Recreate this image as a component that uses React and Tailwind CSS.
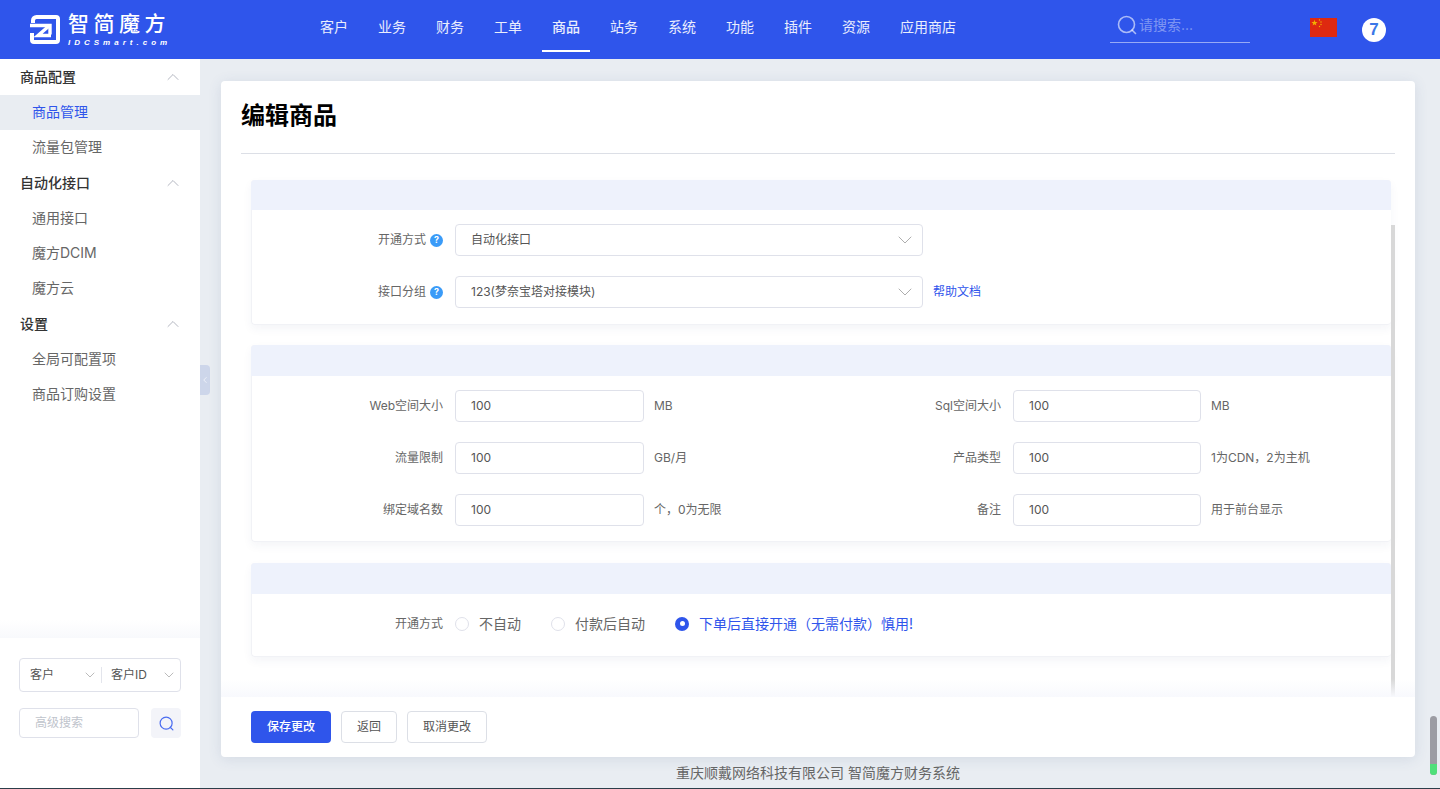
import { ChevronDown, ChevronLeft, ChevronUp } from 'lucide-react';

const navItems = ['客户', '业务', '财务', '工单', '商品', '站务', '系统', '功能', '插件', '资源', '应用商店'];

const menu = [
  { title: '商品配置', items: ['商品管理', '流量包管理'] },
  { title: '自动化接口', items: ['通用接口', '魔方DCIM', '魔方云'] },
  { title: '设置', items: ['全局可配置项', '商品订购设置'] },
];

const specs = [
  ['Web空间大小', 'MB', 'Sql空间大小', 'MB'],
  ['流量限制', 'GB/月', '产品类型', '1为CDN，2为主机'],
  ['绑定域名数', '个，0为无限', '备注', '用于前台显示'],
];

const SearchIcon = ({ className }) => (
  <svg viewBox="0 0 20 20" fill="none" stroke="currentColor" className={className}>
    <circle cx="9.5" cy="9.5" r="8" strokeWidth="1.6" />
    <path d="M15 15l3.5 3.5" strokeWidth="1.6" strokeLinecap="round" />
  </svg>
);

const Logo = () => (
  <div className="flex items-center gap-[9px] w-[276px] pl-[30px] shrink-0 text-white">
    <svg viewBox="0 0 30 29" fill="none" stroke="#fff" className="w-[30px] h-[29px]">
      <path d="M3 8V5.5A3.5 3.5 0 0 1 6.500 2H26a2 2 0 0 1 2 2v21a2 2 0 0 1-2 2H4a2 2 0 0 1-2-2v-7" strokeWidth="4" />
      <path d="M0 10.500h20v9" strokeWidth="3.400" />
      <path d="M19 11L8 20.500h13" strokeWidth="3.400" />
    </svg>
    <div className="flex flex-col -ml-[1px]">
      <span className="text-[21px] leading-[21px] tracking-[4.5px] whitespace-nowrap font-medium font-['Noto_Sans_CJK_SC',sans-serif]">
        智简魔方
      </span>
      <span className="mt-[6px] text-[8px] leading-[8px] font-bold italic tracking-[4px] whitespace-nowrap font-['Liberation_Sans',sans-serif]">
        IDCSmart.com
      </span>
    </div>
  </div>
);

const Header = () => (
  <header className="h-[59px] shrink-0 bg-[#2f55eb] flex items-stretch text-white">
    <Logo />
    <nav className="flex w-[804px] shrink-0 pl-[29px]">
      {navItems.map((item) => (
        <a
          key={item}
          className={`relative px-[15px] flex items-center pb-[6px] text-sm ${
            item === '商品' ? 'font-medium' : ''
          } text-white/90`}
        >
          {item}
          {item === '商品' && <span className="absolute left-[5px] right-[5px] bottom-[7px] h-[2px] bg-white" />}
        </a>
      ))}
    </nav>
    <div className="w-[140px] h-[43px] ml-[30px] shrink-0 border-b border-white/50 flex items-center pl-[7px] pt-[8px] gap-[2px]">
      <SearchIcon className="w-5 h-5 text-white/60" />
      <span className="text-sm text-white/40">请搜索...</span>
    </div>
    <div className="ml-[60px] mt-[18px] w-[27px] h-[19px] bg-[#de2910] shrink-0">
      <svg viewBox="0 0 27 19" className="w-full h-full">
        <polygon points="4.5,1.8 5.3,4 7.6,4 5.8,5.4 6.4,7.6 4.5,6.3 2.6,7.6 3.2,5.4 1.4,4 3.7,4" fill="#f2b000" />
        <circle cx="9.5" cy="2" r="0.7" fill="#f2b000" />
        <circle cx="11" cy="4" r="0.7" fill="#f2b000" />
        <circle cx="11" cy="6.5" r="0.7" fill="#f2b000" />
        <circle cx="9.5" cy="8.5" r="0.7" fill="#f2b000" />
      </svg>
    </div>
    <div className="ml-[25px] mt-[18px] w-6 h-6 rounded-full bg-white flex items-center justify-center text-[#3b78e7] text-[17px] font-bold font-['Liberation_Sans',sans-serif]">
      7
    </div>
  </header>
);

const Sidebar = () => (
  <aside className="relative w-[200px] shrink-0 bg-white flex flex-col">
    <div className="flex-1">
      {menu.map((group) => (
        <div key={group.title}>
          <div className="h-9 pl-5 pr-[17px] flex items-center justify-between text-[#333] text-sm font-medium">
            {group.title}
            <ChevronUp size={20} strokeWidth={0.9} className="text-[#9a9fac]" />
          </div>
          {group.items.map((item) => (
            <div
              key={item}
              className={`h-[35px] pl-8 pb-[2px] flex items-center text-sm ${
                item === '商品管理' ? 'bg-[#e9edf2] text-[#2f55eb]' : 'text-[#666]'
              }`}
            >
              {item}
            </div>
          ))}
        </div>
      ))}
    </div>
    <div className="h-[18px] bg-gradient-to-b from-white to-[#f8f9fc]" />
    <div className="h-[150px] shrink-0 px-[19px] pt-5">
      <div className="h-[34px] border border-[#dfe1ea] rounded flex items-center text-xs text-[#555]">
        <div className="w-[81px] pl-[10px] pr-[3px] flex items-center justify-between">
          客户
          <ChevronDown size={16} strokeWidth={1} className="text-[#999]" />
        </div>
        <span className="w-px h-4 bg-[#e3e5ec]" />
        <div className="flex-1 pl-[9px] pr-[3px] flex items-center justify-between">
          客户ID
          <ChevronDown size={16} strokeWidth={1} className="text-[#999]" />
        </div>
      </div>
      <div className="mt-4 flex gap-3">
        <div className="w-[120px] h-[30px] border border-[#dfe1ea] rounded pl-[15px] flex items-center text-xs text-[#c0c4cc]">
          高级搜索
        </div>
        <button className="w-[30px] h-[30px] rounded bg-[#f3f4f9] flex items-center justify-center text-[#4a6cf0]">
          <SearchIcon className="w-[15px] h-[15px]" />
        </button>
      </div>
    </div>
    <div className="absolute left-full top-[306px] w-[10px] h-[30px] bg-[#cdd6ea] rounded-r flex items-center justify-center text-white">
      <ChevronLeft size={10} strokeWidth={1.5} className="shrink-0" />
    </div>
  </aside>
);

const Help = () => (
  <span className="w-[13px] h-[13px] rounded-full bg-[#3a9bf8] text-white text-[9px] font-bold flex items-center justify-center">
    ?
  </span>
);

const Section = ({ className, tall, children }) => (
  <section className={`rounded border border-[#f1f2f6] border-r-0 shadow-[0_4px_10px_rgba(40,60,120,0.05)] ${className}`}>
    <div className={`${tall ? 'h-[31px]' : 'h-[30px]'} -ml-px -mt-px bg-[#eef2fc] rounded-t`} />
    {children}
  </section>
);

const Label = ({ children, help }) => (
  <div className="w-[191px] shrink-0 flex items-center justify-end gap-1 text-xs text-[#666]">
    {children}
    {help && <Help />}
  </div>
);

const SelectField = ({ label, value, children }) => (
  <div className="flex items-center gap-3">
    <Label help>{label}</Label>
    <div className="w-[468px] h-8 border border-[#dfe1ea] rounded pl-[15px] pr-[5px] flex items-center justify-between text-xs text-[#555]">
      {value}
      <ChevronDown size={24} strokeWidth={0.8} className="text-[#999]" />
    </div>
    {children}
  </div>
);

const InputField = ({ label, unit, wide }) => (
  <div className="flex items-center gap-3">
    <Label>{label}</Label>
    <div className={`${wide ? 'w-[189px]' : 'w-[188px]'} h-8 border border-[#dfe1ea] rounded pl-[15px] flex items-center text-xs text-[#555]`}>
      100
    </div>
    <span className="-ml-[2px] text-xs text-[#666]">{unit}</span>
  </div>
);

const Radio = ({ label, checked }) => (
  <div className={`flex items-center gap-[10px] text-sm ${checked ? 'text-[#2f55eb]' : 'text-[#666]'}`}>
    {checked ? (
      <span className="w-[14px] h-[14px] rounded-full bg-[#2f55eb] flex items-center justify-center">
        <span className="w-[5px] h-[5px] rounded-full bg-white" />
      </span>
    ) : (
      <span className="w-[14px] h-[14px] rounded-full border border-[#dfe1ea]" />
    )}
    {label}
  </div>
);

const EditCard = () => (
  <div className="relative h-[676px] bg-white rounded shadow-[0_2px_14px_rgba(60,80,130,0.12)] flex flex-col">
    <div className="mx-5 h-[73px] shrink-0 border-b border-[#dcdfe6] flex items-center pb-[2px]">
      <h1 className="text-2xl font-bold text-black">编辑商品</h1>
    </div>
    <div className="relative h-[543px] shrink-0 overflow-hidden pl-[30px] pt-[26px]">
      <div className="w-[1140px] flex flex-col">
        <Section className="h-[145px]">
          <div className="pt-[14px] flex flex-col gap-5">
            <SelectField label="开通方式" value="自动化接口" />
            <SelectField label="接口分组" value="123(梦奈宝塔对接模块)">
              <a className="-ml-[2px] text-xs text-[#2f55eb]">帮助文档</a>
            </SelectField>
          </div>
        </Section>
        <Section className="h-[197px] mt-5" tall>
          <div className="pt-[14px] flex flex-col gap-5">
            {specs.map(([leftLabel, leftUnit, rightLabel, rightUnit]) => (
              <div key={leftLabel} className="grid grid-cols-[558px_1fr]">
                <InputField label={leftLabel} unit={leftUnit} wide />
                <InputField label={rightLabel} unit={rightUnit} />
              </div>
            ))}
          </div>
        </Section>
        <Section className="h-[94px] mt-[21px]" tall>
          <div className="pt-[13px] flex items-center gap-3 h-[46px]">
            <Label>开通方式</Label>
            <div className="flex items-center gap-[30px]">
              <Radio label="不自动" />
              <Radio label="付款后自动" />
              <Radio label="下单后直接开通（无需付款）慎用!" checked />
            </div>
          </div>
        </Section>
      </div>
      <div className="absolute right-5 top-[71px] bottom-0 w-1 bg-[#d8d8d8]" />
      <div className="absolute left-0 right-0 bottom-0 h-[18px] bg-gradient-to-b from-white/0 to-[#f8f9fd]" />
    </div>
    <div className="flex-1 pl-[30px] flex items-start pt-[14px] gap-[10px] text-xs">
      <button className="w-20 h-8 rounded-sm bg-[#2f55eb] text-white font-medium">保存更改</button>
      <button className="w-14 h-8 rounded-sm border border-[#dcdfe6] text-[#555]">返回</button>
      <button className="w-20 h-8 rounded-sm border border-[#dcdfe6] text-[#555]">取消更改</button>
    </div>
  </div>
);

export default function App() {
  return (
    <div className="relative h-[789px] overflow-hidden flex flex-col bg-[#e9edf2] font-['Inter','Noto_Sans_CJK_SC',sans-serif]">
      <Header />
      <div className="flex flex-1 min-h-0">
        <Sidebar />
        <main className="flex-1 min-w-0 pl-[21px] pr-[25px] pt-[22px]">
          <EditCard />
          <p className="mt-[6px] text-center text-sm text-[#666]">重庆顺戴网络科技有限公司 智简魔方财务系统</p>
        </main>
      </div>
      <div className="h-px shrink-0 bg-[#2c3e4a]" />
      <div className="absolute left-[1430px] top-[716px] w-[7px] h-[59px] rounded-full bg-[#9c9ca3] overflow-hidden flex flex-col justify-end">
        <span className="h-[11px] bg-[#4fe07a]" />
      </div>
    </div>
  );
}
